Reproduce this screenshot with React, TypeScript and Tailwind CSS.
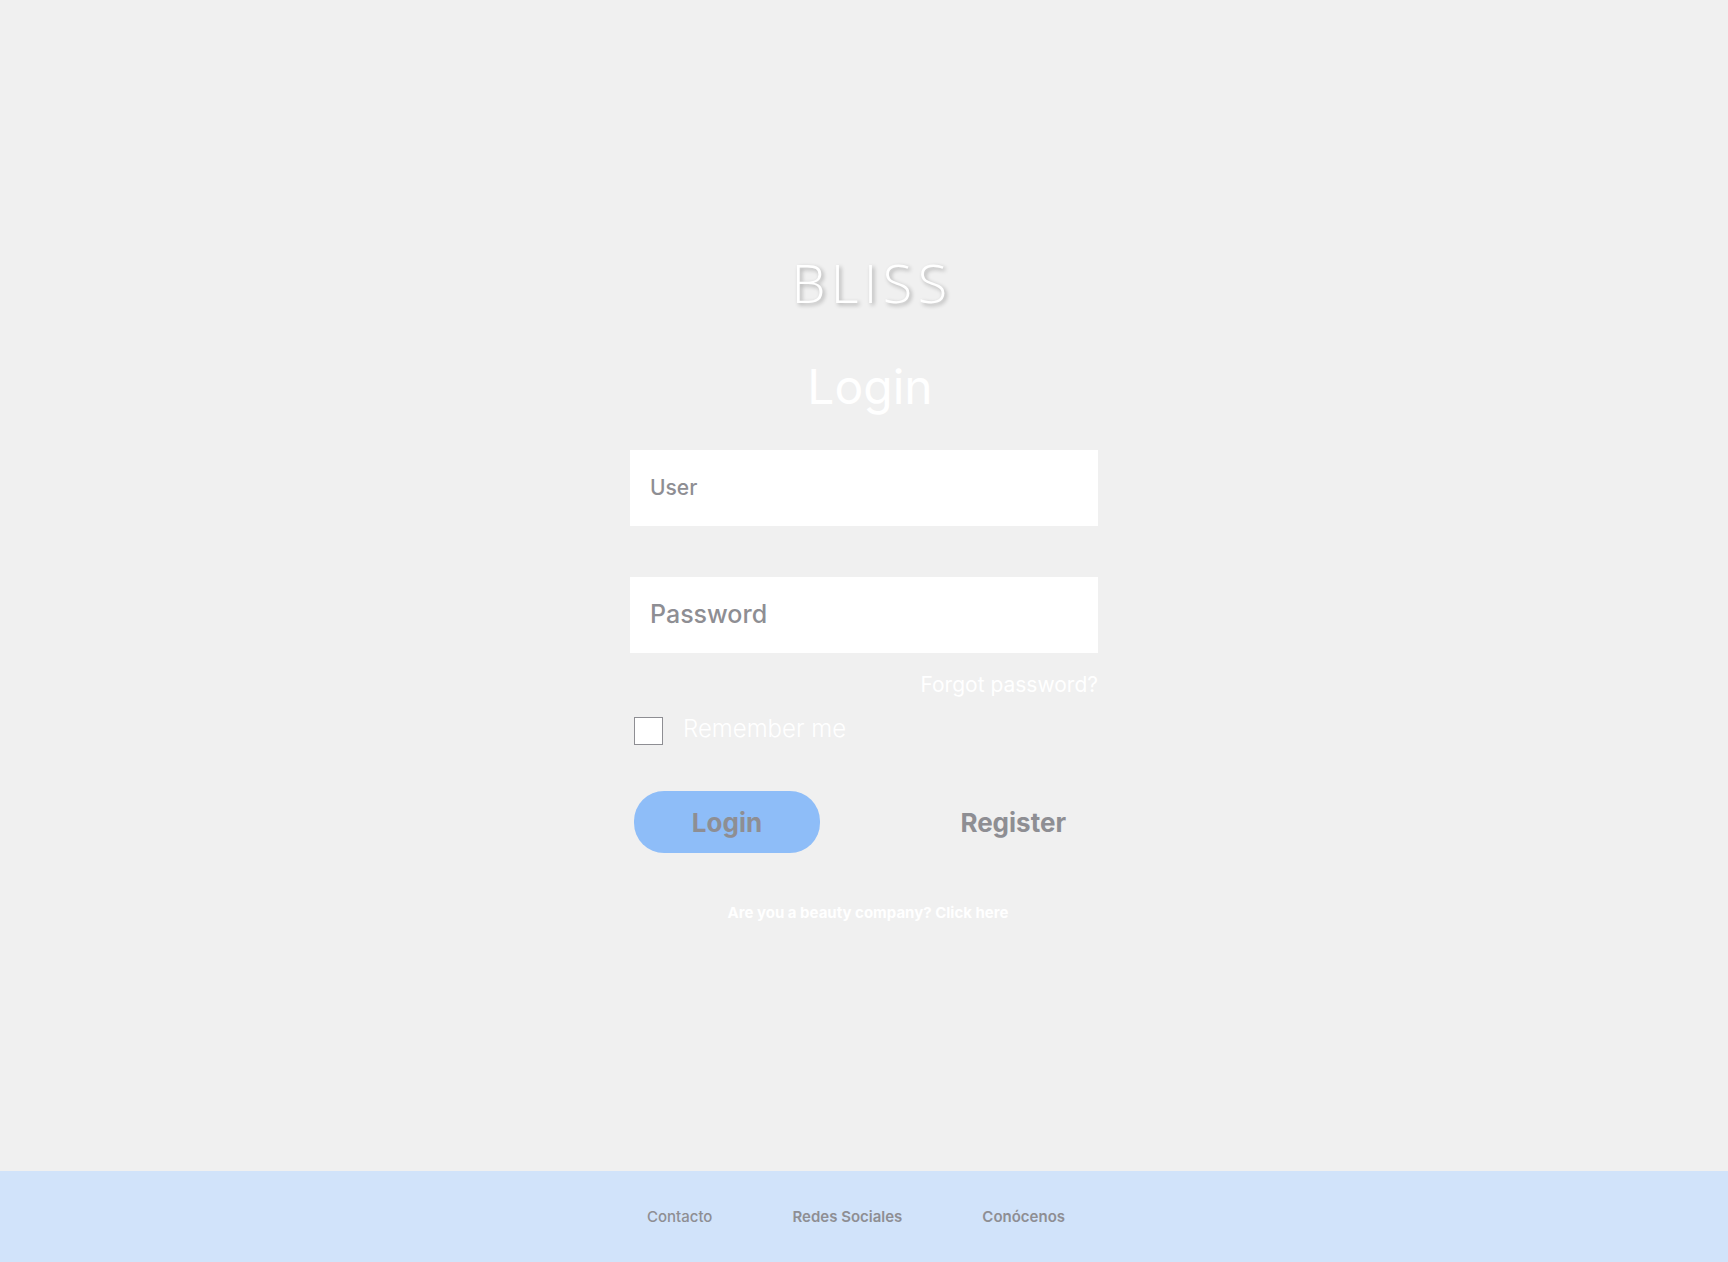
export default function App() {
  return (
    <div className="flex min-h-screen flex-col bg-[#f0f0f0] font-['Inter',sans-serif] text-[#8e8e93]">
      <main className="flex flex-1 flex-col items-center px-4 pt-[246px] pb-16">
        <div className="pl-4 font-['Open_Sans',sans-serif] text-[54px] leading-[72px] font-light tracking-widest text-white [text-shadow:2px_2px_4px_rgba(0,0,0,0.3)]">
          BLISS
        </div>
        <form className="flex w-full max-w-[468px] flex-col" onSubmit={(e) => e.preventDefault()}>
          <h1 className="mt-[37px] pl-3 text-center text-5xl leading-[64px] text-white">Login</h1>
          <input
            aria-label="User"
            type="text"
            placeholder="User"
            className="mt-[31px] h-[76px] w-full bg-white px-5 pb-0.5 text-[21px] font-medium placeholder:text-[#8e8e93]"
          />
          <input
            aria-label="Password"
            type="password"
            placeholder="Password"
            className="mt-[51px] h-[76px] w-full bg-white px-5 pb-0.5 text-[25px] font-medium placeholder:text-[#8e8e93]"
          />
          <a href="#forgot" className="mt-4 self-end text-[21px] leading-8 text-white">
            Forgot password?
          </a>
          <div className="mt-[14px] flex items-center gap-5 pl-1">
            <input
              id="remember"
              type="checkbox"
              className="h-7 w-[29px] appearance-none border border-[#8e8e93] bg-white checked:bg-[#8ebdf8]"
            />
            <label htmlFor="remember" className="pb-1 text-2xl leading-7 font-light text-white">
              Remember me
            </label>
          </div>
          <div className="mt-[44px] flex items-center justify-between pr-8 pl-1 text-[26px] font-bold">
            <button type="submit" className="h-[62px] w-[186px] rounded-[30px] bg-[#8ebdf8]">
              Login
            </button>
            <button type="button" className="h-[62px]">Register</button>
          </div>
          <a href="#company" className="mt-12 self-center pl-2 text-[15px] leading-6 font-bold text-white">
            Are you a beauty company? Click here
          </a>
        </form>
      </main>
      <footer className="flex h-[91px] items-center justify-center bg-[#d1e3fa] pr-4">
        <nav className="flex gap-20 text-[15px] leading-6 font-semibold">
          <a href="#contacto" className="font-medium">Contacto</a>
          <a href="#redes">Redes Sociales</a>
          <a href="#conocenos">Conócenos</a>
        </nav>
      </footer>
    </div>
  );
}
